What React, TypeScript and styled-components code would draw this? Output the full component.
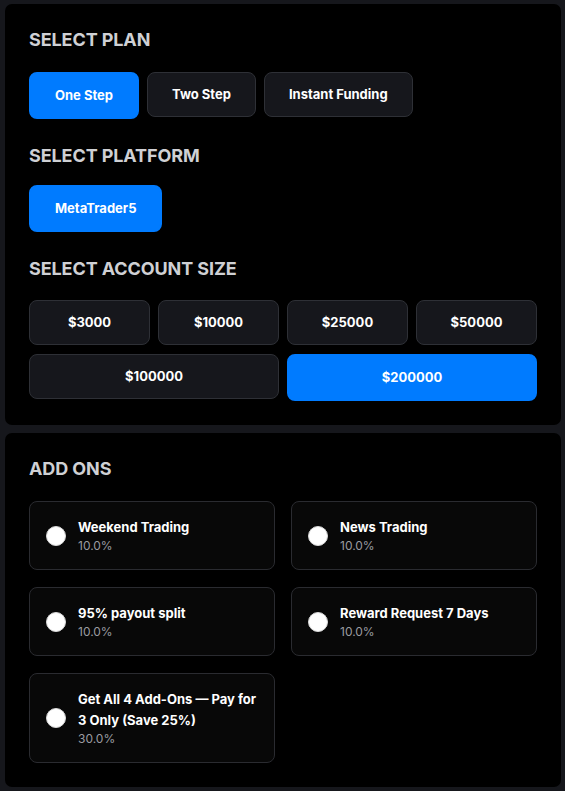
import React, { useState } from 'react';
import styled, { createGlobalStyle } from 'styled-components';

const GlobalStyle = createGlobalStyle`
  html, body {
    margin: 0;
    background: #16171c;
  }

  body {
    padding: 4px 4px 4px 5px;
    font-family: Inter, "Liberation Sans", Arial, sans-serif;
    color: #fff;
  }
`;

const Page = styled.div`
  display: flex;
  flex-direction: column;
  gap: 8px;
`;

const Card = styled.section`
  background: #000;
  border-radius: 7px;
  padding: 26px 24px 24px;
`;

const Heading = styled.h3<{ $space?: number }>`
  margin: 0 0 ${(p) => p.$space ?? 22}px;
  font-size: 18px;
  line-height: 20px;
  font-weight: 700;
  letter-spacing: -0.1px;
  color: #cfd0d4;
  text-transform: uppercase;
`;

const Group = styled.div`
  & + & {
    margin-top: 27px;
  }
`;

const Row = styled.div`
  display: flex;
  align-items: flex-start;
  gap: 8px;
`;

const SizeGrid = styled.div`
  display: grid;
  grid-template-columns: repeat(4, 1fr);
  column-gap: 8px;
  row-gap: 9px;
  align-items: start;
`;

const Choice = styled.button<{ $active?: boolean; $span?: number }>`
  grid-column: span ${(p) => p.$span ?? 1};
  padding: 14px 24px;
  font-family: inherit;
  font-size: 13px;
  line-height: 15px;
  font-weight: 700;
  color: #fff;
  border-radius: 8px;
  cursor: pointer;
  background: ${(p) => (p.$active ? '#007bff' : '#16171c')};
  border: ${(p) => (p.$active ? '2px solid #007bff' : '1px solid #2e3036')};
  white-space: nowrap;
`;

const AddOnGrid = styled.div`
  display: grid;
  grid-template-columns: 1fr 1fr;
  column-gap: 16px;
  row-gap: 17px;
  align-items: start;
`;

const AddOn = styled.label`
  display: flex;
  align-items: center;
  gap: 12px;
  padding: 15px 16px;
  background: #080808;
  border: 1px solid #2a2b30;
  border-radius: 8px;
  cursor: pointer;
`;

const Radio = styled.span<{ $checked?: boolean }>`
  flex: none;
  width: 20px;
  height: 20px;
  border-radius: 50%;
  background: #fff;
  box-sizing: border-box;
  border: ${(p) => (p.$checked ? '6px solid #007bff' : '1px solid #d8d8d8')};
`;

const AddOnText = styled.div`
  display: flex;
  flex-direction: column;
  min-width: 0;
`;

const AddOnName = styled.span`
  font-size: 13px;
  line-height: 21px;
  font-weight: 700;
  color: #fff;
`;

const AddOnRate = styled.span`
  font-size: 12px;
  line-height: 16px;
  color: #9a9ba0;
`;

const plans = ['One Step', 'Two Step', 'Instant Funding'];
const sizes = ['$3000', '$10000', '$25000', '$50000', '$100000', '$200000'];

const addOns = [
  { name: 'Weekend Trading', rate: '10.0%' },
  { name: 'News Trading', rate: '10.0%' },
  { name: '95% payout split', rate: '10.0%' },
  { name: 'Reward Request 7 Days', rate: '10.0%' },
  { name: 'Get All 4 Add-Ons \u2014 Pay for 3 Only (Save 25%)', rate: '30.0%' },
];

export default function App() {
  const [plan, setPlan] = useState('One Step');
  const [size, setSize] = useState('$200000');
  const [picked, setPicked] = useState<string[]>([]);

  const toggle = (name: string) =>
    setPicked((cur) => (cur.includes(name) ? cur.filter((n) => n !== name) : [...cur, name]));

  return (
    <>
      <GlobalStyle />
      <Page>
        <Card>
          <Group>
            <Heading>Select Plan</Heading>
            <Row>
              {plans.map((p) => (
                <Choice key={p} $active={plan === p} onClick={() => setPlan(p)}>
                  {p}
                </Choice>
              ))}
            </Row>
          </Group>
          <Group>
            <Heading $space={19}>Select Platform</Heading>
            <Row>
              <Choice $active>MetaTrader5</Choice>
            </Row>
          </Group>
          <Group>
            <Heading $space={21}>Select Account Size</Heading>
            <SizeGrid>
              {sizes.map((s, i) => (
                <Choice key={s} $span={i > 3 ? 2 : 1} $active={size === s} onClick={() => setSize(s)}>
                  {s}
                </Choice>
              ))}
            </SizeGrid>
          </Group>
        </Card>
        <Card>
          <Heading>Add Ons</Heading>
          <AddOnGrid>
            {addOns.map((a) => (
              <AddOn key={a.name} onClick={() => toggle(a.name)}>
                <Radio $checked={picked.includes(a.name)} />
                <AddOnText>
                  <AddOnName>{a.name}</AddOnName>
                  <AddOnRate>{a.rate}</AddOnRate>
                </AddOnText>
              </AddOn>
            ))}
          </AddOnGrid>
        </Card>
      </Page>
    </>
  );
}
